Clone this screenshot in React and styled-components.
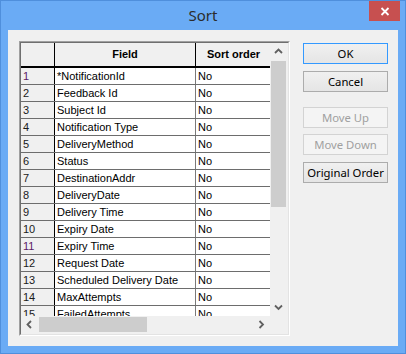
import React from "react";
import styled, { createGlobalStyle } from "styled-components";

const Global = createGlobalStyle`
  html, body { margin: 0; padding: 0; background: #ffffff; }
  #root { width: 406px; height: 354px; }
  * { box-sizing: border-box; }
`;

const Window = styled.div`
  width: 406px;
  height: 354px;
  background: #6aabf5;
  border: 1px solid #4f8fdc;
  display: flex;
  flex-direction: column;
`;

const TitleBar = styled.div`
  height: 29px;
  flex: none;
  display: grid;
  grid-template-columns: 1fr auto 1fr;
  align-items: start;
`;

const Title = styled.div`
  grid-column: 2;
  line-height: 29px;
  font-family: "Noto Sans", "Open Sans", sans-serif;
  font-size: 15px;
  color: #2b2b2b;
`;

const CloseButton = styled.div`
  grid-column: 3;
  justify-self: end;
  width: 31px;
  height: 20px;
  margin-right: 5px;
  background: #c75050;
  display: flex;
  align-items: center;
  justify-content: center;
`;

const Client = styled.div`
  flex: 1;
  margin: 0 7px 7px;
  background: #f0f0f0;
  display: flex;
  align-items: flex-start;
  gap: 13px;
  padding: 11px 0 0 11px;
`;

const FrameOuter = styled.div`
  width: 271px;
  height: 295px;
  border: 1px solid;
  border-color: #a0a0a0 #ffffff #ffffff #a0a0a0;
  flex: none;
`;

const FrameInner = styled.div`
  width: 100%;
  height: 100%;
  border: 1px solid;
  border-color: #6f6f6f #e3e3e3 #e3e3e3 #6f6f6f;
  display: grid;
  grid-template-columns: 249px 17px;
  grid-template-rows: 273px 17px;
`;

const TableView = styled.div`
  overflow: hidden;
  background: #ffffff;
  font-family: "Liberation Sans", Arial, sans-serif;
  font-size: 11px;
  color: #000000;
`;

const Row = styled.div`
  display: flex;
  width: 520px;
  height: ${(p) => (p.$header ? "25px" : "17px")};
  border-bottom: ${(p) => (p.$header ? "2px solid #000000" : "1px solid #6d6d6d")};
`;

const Cell = styled.div`
  flex: none;
  width: ${(p) => p.$w}px;
  height: 100%;
  line-height: ${(p) => (p.$header ? "23px" : "16px")};
  padding-left: ${(p) => (p.$header ? 0 : 2)}px;
  text-align: ${(p) => (p.$header ? "center" : "left")};
  font-weight: ${(p) => (p.$header ? 700 : 400)};
  background: ${(p) => (p.$head || p.$header ? "#f0f0f0" : "#ffffff")};
  border-right: 1px solid ${(p) => (p.$dark || p.$header ? "#000000" : "#7a7a7a")};
  color: ${(p) => p.$color || "#000000"};
  white-space: nowrap;
  overflow: hidden;
`;

const VScroll = styled.div`
  background: #f0f0f0;
  display: flex;
  flex-direction: column;
`;

const HScroll = styled.div`
  background: #f0f0f0;
  display: flex;
  flex-direction: row;
`;

const Corner = styled.div`
  background: #f0f0f0;
`;

const ArrowBox = styled.div`
  width: 17px;
  height: 17px;
  flex: none;
  display: flex;
  align-items: center;
  justify-content: center;
`;

const Track = styled.div`
  flex: 1;
  display: flex;
  flex-direction: ${(p) => (p.$vertical ? "column" : "row")};
  padding: ${(p) => (p.$vertical ? "1px 1px" : "1px 0 1px 1px")};
`;

const Thumb = styled.div`
  background: #cdcdcd;
  ${(p) => (p.$vertical ? `height: ${p.$size}px; width: 100%;` : `width: ${p.$size}px; height: 100%;`)}
`;

const ButtonColumn = styled.div`
  display: flex;
  flex-direction: column;
  padding-top: 2px;
  width: 85px;
`;

const Button = styled.div`
  height: 21px;
  margin-top: ${(p) => p.$gap || 0}px;
  border: 1px solid ${(p) => (p.$default ? "#3399ff" : p.$disabled ? "#d3d3d3" : "#acacac")};
  background: ${(p) => (p.$disabled ? "#f4f4f4" : "linear-gradient(#f0f0f0, #e5e5e5)")};
  color: ${(p) => (p.$disabled ? "#a0a0a0" : "#000000")};
  font-family: "Noto Sans", "Open Sans", sans-serif;
  font-size: 11.3px;
  line-height: 19px;
  text-align: center;
  white-space: nowrap;
`;

const paths = {
  up: "M1 5 L4.5 1.5 L8 5",
  down: "M1 1.5 L4.5 5 L8 1.5",
  left: "M5 1 L1.5 4.5 L5 8",
  right: "M1.5 1 L5 4.5 L1.5 8",
};

function Chevron({ dir }) {
  const vertical = dir === "up" || dir === "down";
  const w = vertical ? 9 : 7;
  const h = vertical ? 7 : 9;
  return (
    <svg width={w} height={h} viewBox={`0 0 ${w} ${h}`}>
      <path d={paths[dir]} fill="none" stroke="#606060" strokeWidth="1.8" />
    </svg>
  );
}

const rows = [
  "*NotificationId",
  "Feedback Id",
  "Subject Id",
  "Notification Type",
  "DeliveryMethod",
  "Status",
  "DestinationAddr",
  "DeliveryDate",
  "Delivery Time",
  "Expiry Date",
  "Expiry Time",
  "Request Date",
  "Scheduled Delivery Date",
  "MaxAttempts",
  "FailedAttempts",
];

export default function App() {
  return (
    <>
      <Global />
      <Window>
        <TitleBar>
          <Title>Sort</Title>
          <CloseButton>
            <svg width="10" height="9" viewBox="0 0 10 9">
              <path d="M1.5 1 L8.5 8 M8.5 1 L1.5 8" stroke="#ffffff" strokeWidth="1.8" />
            </svg>
          </CloseButton>
        </TitleBar>
        <Client>
          <FrameOuter>
            <FrameInner>
              <TableView>
                <Row $header>
                  <Cell $w={34} $header></Cell>
                  <Cell $w={141} $header>Field</Cell>
                  <Cell $w={76} $header>Sort order</Cell>
                </Row>
                {rows.map((name, i) => (
                  <Row key={name}>
                    <Cell $w={34} $head $dark $color={i === 0 || i === 10 ? "#5c1a66" : "#1a1a1a"}>
                      {i + 1}
                    </Cell>
                    <Cell $w={141}>{name}</Cell>
                    <Cell $w={110}>No</Cell>
                  </Row>
                ))}
              </TableView>
              <VScroll>
                <ArrowBox><Chevron dir="up" /></ArrowBox>
                <Track $vertical>
                  <Thumb $vertical $size={146} />
                </Track>
                <ArrowBox><Chevron dir="down" /></ArrowBox>
              </VScroll>
              <HScroll>
                <ArrowBox><Chevron dir="left" /></ArrowBox>
                <Track>
                  <Thumb $size={108} />
                </Track>
                <ArrowBox><Chevron dir="right" /></ArrowBox>
              </HScroll>
              <Corner />
            </FrameInner>
          </FrameOuter>
          <ButtonColumn>
            <Button $default>OK</Button>
            <Button $gap={7}>Cancel</Button>
            <Button $gap={15} $disabled>Move Up</Button>
            <Button $gap={6} $disabled>Move Down</Button>
            <Button $gap={7}>Original Order</Button>
          </ButtonColumn>
        </Client>
      </Window>
    </>
  );
}
